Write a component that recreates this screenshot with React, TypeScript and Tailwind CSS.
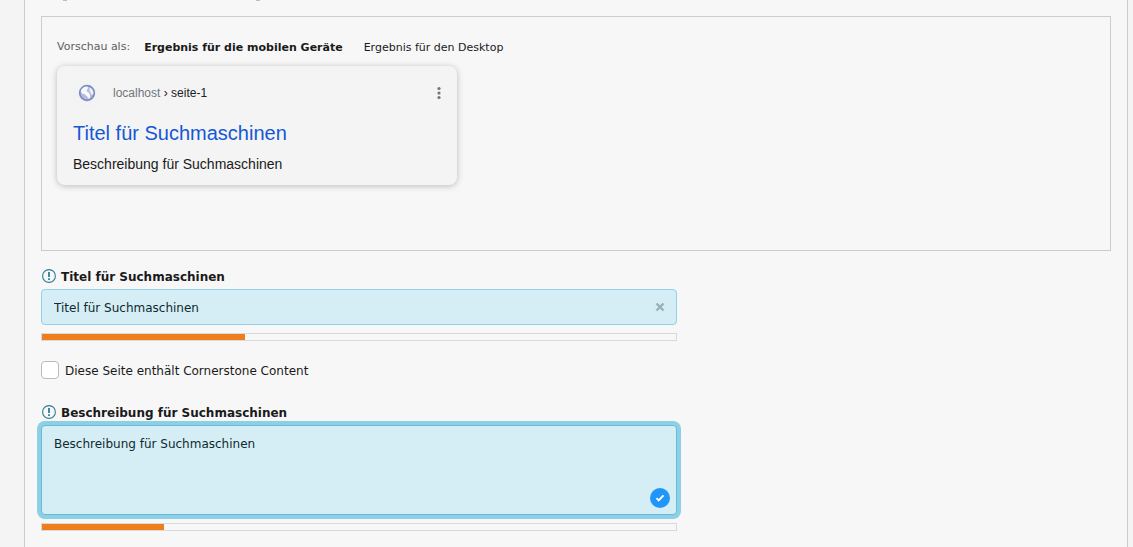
import { useState } from 'react';

function FieldLabel({ htmlFor, text }: { htmlFor: string; text: string }) {
  return (
    <label htmlFor={htmlFor} className="flex h-[18px] items-center gap-[5px] pl-px font-bold">
      <svg viewBox="0 0 14 14" className="size-3.5 shrink-0" fill="none" stroke="#2f7d95" aria-hidden="true">
        <circle cx="7" cy="7" r="6.4" strokeWidth="1.1" />
        <path d="M7 3v5M7 9.300v1.700" strokeWidth="1.8" />
      </svg>
      <span className="pt-0.5">{text}</span>
    </label>
  );
}

function Globe() {
  return (
    <span className="flex size-7 items-center justify-center rounded-full bg-[#f1f3f4]">
      <svg viewBox="0 0 18 18" className="size-[18px]" aria-hidden="true">
        <circle cx="9" cy="9" r="7.300" fill="#b3badb" stroke="#7f8bc0" strokeWidth="1.700" />
        <path
          d="M2.800 7C3.600 4.500 5.600 2.900 8 2.600L10 3 9.600 5 8.600 6.200 9 7.600 10.600 8.600 12 10.400 12.200 13.600 10.400 14.800 9.200 12.600 7.400 11 6 9.800 4.400 10Z"
          fill="#f6f8fc"
        />
        <path d="M11.800 3.400C14 4.600 15.400 6.600 15.400 9L14.600 11 13.200 10 12.400 8 11.400 6.200Z" fill="#f1f3f9" />
      </svg>
    </span>
  );
}

function Progress({ value, label }: { value: number; label: string }) {
  return (
    <div
      role="progressbar"
      aria-label={label}
      aria-valuenow={value}
      aria-valuemin={0}
      aria-valuemax={100}
      className="mt-2 h-2 border border-[#dadada]"
    >
      <div className="h-full bg-[#ee7d1b]" style={{ width: `${value}%` }} />
    </div>
  );
}

export default function App() {
  const [title, setTitle] = useState('Titel für Suchmaschinen');
  const [description, setDescription] = useState('Beschreibung für Suchmaschinen');
  const [mode, setMode] = useState('mobile');

  return (
    <div className="h-screen overflow-hidden bg-[#f4f4f4] pr-[5px] pl-6 font-['DejaVu_Sans',sans-serif] text-xs text-[#1a1a1a]">
      <main className="min-h-screen border-x border-[#cccccc] bg-[#f7f7f7] px-4">
        <div className="flex h-4 gap-[189px] pl-[22px]" aria-hidden="true">
          <span className="h-px w-1 bg-[#bdbdbd]" />
          <span className="h-px w-1 bg-[#bdbdbd]" />
        </div>
        <section className="h-[235px] border border-[#cccccc] px-[15px] pt-[22px]">
          <div className="flex h-[18px] items-start text-[11px] leading-4">
            <span className="mr-[14px] text-[#606060]">Vorschau als:</span>
            <div className="flex gap-[21px] pt-px">
              <button type="button" onClick={() => setMode('mobile')} className={mode === 'mobile' ? 'font-bold' : ''}>
                Ergebnis für die mobilen Geräte
              </button>
              <button type="button" onClick={() => setMode('desktop')} className={mode === 'desktop' ? 'font-bold' : ''}>
                Ergebnis für den Desktop
              </button>
            </div>
          </div>
          <article className="mt-[9px] h-[119px] max-w-[400px] rounded-lg bg-[#f4f4f4] px-4 pt-[13px] font-['Liberation_Sans',Arial,sans-serif] shadow-[0_1px_6px_rgba(32,33,36,0.28)]">
            <div className="flex items-center">
              <Globe />
              <p className="ml-3 text-xs leading-5 text-[#202124]">
                <span className="text-[#70757a]">localhost</span> › seite-1
              </p>
              <button type="button" aria-label="Mehr" className="ml-auto">
                <svg viewBox="0 0 4 14" className="h-3.5 w-1" fill="#70757a" aria-hidden="true">
                  <circle cx="2" cy="2.500" r="1.600" />
                  <circle cx="2" cy="7" r="1.600" />
                  <circle cx="2" cy="11.500" r="1.600" />
                </svg>
              </button>
            </div>
            <h2 className="mt-[13px] text-xl leading-[26px] text-[#1558d6]">{title}</h2>
            <p className="mt-2 text-sm leading-5">{description}</p>
          </article>
        </section>

        <div className="flex max-w-[636px] flex-col">
          <div className="mt-4">
            <FieldLabel htmlFor="title" text="Titel für Suchmaschinen" />
          </div>
          <div className="relative mt-1">
            <input
              id="title"
              value={title}
              onChange={(e) => setTitle(e.target.value)}
              className="block h-9 w-full rounded-[4px] border border-[#92d1e8] bg-[#d5eef5] pt-0.5 pr-8 pl-3 text-[#10292f] outline-none"
            />
            <button type="button" aria-label="Leeren" onClick={() => setTitle('')} className="absolute top-1/2 right-3 -translate-y-1/2">
              <svg viewBox="0 0 10 10" className="size-2.5" stroke="#9aafb5" strokeWidth="2.400" aria-hidden="true">
                <path d="M1.500 1.500l7 7M8.500 1.500l-7 7" />
              </svg>
            </button>
          </div>
          <Progress value={32} label="Titellänge" />

          <div className="mt-5 flex h-[18px] items-center gap-[6px]">
            <input
              id="cornerstone"
              type="checkbox"
              className="size-[18px] appearance-none rounded-[4px] border border-[#bbbbbb] bg-white checked:bg-[#2196f3]"
            />
            <label htmlFor="cornerstone" className="pt-0.5">
              Diese Seite enthält Cornerstone Content
            </label>
          </div>

          <div className="mt-6">
            <FieldLabel htmlFor="description" text="Beschreibung für Suchmaschinen" />
          </div>
          <div className="relative mt-1">
            <textarea
              id="description"
              value={description}
              onChange={(e) => setDescription(e.target.value)}
              className="block h-[90px] w-full resize-none rounded-[4px] border border-[#66bcd8] bg-[#d5eef5] px-3 py-[9px] leading-[18px] text-[#10292f] shadow-[0_0_0_4px_#8dcfe5] outline-none"
            />
            <span className="absolute right-[7px] bottom-[7px] flex size-5 items-center justify-center rounded-full bg-[#2196fa]">
              <svg viewBox="0 0 10 10" className="size-2.5" fill="none" stroke="white" strokeWidth="1.900" aria-hidden="true">
                <path d="M1.500 5.200l2.200 2.200L8.500 2.400" />
              </svg>
            </span>
          </div>
          <Progress value={19.2} label="Beschreibungslänge" />
        </div>
      </main>
    </div>
  );
}
